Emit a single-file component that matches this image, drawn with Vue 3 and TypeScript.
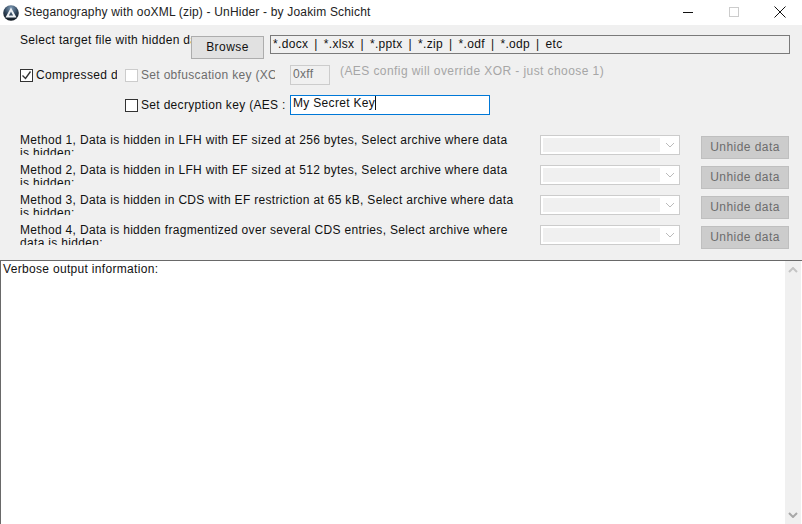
<script setup lang="ts">
const methods = [
  'Method 1, Data is hidden in LFH with EF sized at 256 bytes, Select archive where data is hidden:',
  'Method 2, Data is hidden in LFH with EF sized at 512 bytes, Select archive where data is hidden:',
  'Method 3, Data is hidden in CDS with EF restriction at 65 kB, Select archive where data is hidden:',
  'Method 4, Data is hidden fragmentized over several CDS entries, Select archive where data is hidden:',
];
</script>

<template>
  <div class="window">
    <header class="titlebar">
      <svg class="logo" width="16" height="16" viewBox="0 0 16 16">
        <defs>
          <radialGradient id="orb" cx="50%" cy="20%" r="80%">
            <stop offset="0" stop-color="#7f9cb8" />
            <stop offset="0.55" stop-color="#2f4358" />
            <stop offset="1" stop-color="#10161d" />
          </radialGradient>
        </defs>
        <circle cx="8" cy="8" r="7.8" fill="url(#orb)" />
        <path d="M8 2.5 L13.5 12.5 H2.5 Z M8 6.4 L5.9 10.4 H10.1 Z" fill="#eef2f6" fill-rule="evenodd" />
      </svg>
      <span class="title">Steganography with ooXML (zip) - UnHider - by Joakim Schicht</span>
      <div class="controls">
        <svg width="12" height="12" viewBox="0 0 12 12"><path d="M1 6.5H11" stroke="#111" /></svg>
        <svg width="12" height="12" viewBox="0 0 12 12"><rect x="1.5" y="1.5" width="9" height="9" fill="none" stroke="#ccc" /></svg>
        <svg width="12" height="12" viewBox="0 0 12 12"><path d="M.5.5l11 11M11.5.5l-11 11" stroke="#111" /></svg>
      </div>
    </header>

    <main class="panel">
      <section class="row-file">
        <span class="clip label-file">Select target file with hidden data:</span>
        <button class="browse">Browse</button>
        <div class="field-file">*.docx | *.xlsx | *.pptx | *.zip | *.odf | *.odp | etc</div>
      </section>

      <section class="row-options">
        <span class="check checked">
          <svg width="11" height="11" viewBox="0 0 11 11"><path d="M1.5 5.5l3 3 5-7" fill="none" stroke="#333" stroke-width="1.4" /></svg>
        </span>
        <span class="clip label-compressed">Compressed data</span>
        <span class="check disabled"></span>
        <span class="clip label-obf">Set obfuscation key (XOR)</span>
        <div class="field-xor">0xff</div>
        <span class="hint">(AES config will override XOR - just choose 1)</span>
      </section>

      <section class="row-key">
        <span class="check"></span>
        <span class="clip label-key">Set decryption key (AES :</span>
        <div class="field-key">My Secret Key<i class="caret"></i></div>
      </section>

      <section class="methods">
        <div v-for="m in methods" :key="m" class="method">
          <p class="method-text">{{ m }}</p>
          <div class="select">
            <span class="select-inner"></span>
            <svg width="10" height="6" viewBox="0 0 10 6"><path d="M1 1l4 4 4-4" fill="none" stroke="#bbb" /></svg>
          </div>
          <button class="unhide" disabled>Unhide data</button>
        </div>
      </section>
    </main>

    <section class="output">
      <div class="output-text">Verbose output information:</div>
      <div class="scrollbar">
        <svg width="10" height="6" viewBox="0 0 10 6"><path d="M1 5l4-4 4 4" fill="none" stroke="#c4c4c4" stroke-width="2" /></svg>
        <svg width="10" height="6" viewBox="0 0 10 6"><path d="M1 1l4 4 4-4" fill="none" stroke="#a8a8a8" stroke-width="2" /></svg>
      </div>
    </section>
  </div>
</template>

<style scoped>
.window {
  width: 802px;
  height: 524px;
  display: flex;
  flex-direction: column;
  background: #f0f0f0;
  font-family: "Liberation Sans", Arial, sans-serif;
  font-size: 12px;
  letter-spacing: 0.32px;
  color: #111;
  overflow: hidden;
}
.titlebar {
  height: 25px;
  box-sizing: border-box;
  padding: 0 0 1px 3px;
  flex: none;
  display: flex;
  align-items: center;
  background: #fff;
}
.logo {
  margin: 1px 5px 0 0;
}
.title {
  flex: 1;
  color: #222;
  letter-spacing: 0.18px;
}
.controls {
  display: flex;
  gap: 34px;
  padding-right: 16px;
}
.panel {
  height: 235px;
  flex: none;
  box-sizing: border-box;
  display: flex;
  flex-direction: column;
  padding: 0 12px 0 20px;
}
.clip {
  display: block;
  overflow: hidden;
  white-space: nowrap;
  flex: none;
}
.row-file {
  display: flex;
  align-items: flex-start;
  box-sizing: border-box;
  height: 40px;
  padding-top: 10px;
}
.label-file {
  width: 171px;
  margin-top: -2px;
}
.browse {
  width: 73px;
  height: 23px;
  margin-top: 1px;
  background: #e1e1e1;
  border: 1px solid #adadad;
  font: inherit;
  letter-spacing: 0.45px;
  color: #111;
  padding: 0 0 2px;
}
.field-file {
  width: 520px;
  height: 19px;
  margin-left: 6px;
  border: 1px solid #7a7a7a;
  box-sizing: border-box;
  line-height: 16px;
  padding-left: 2px;
  word-spacing: 2.4px;
}
.row-options {
  display: flex;
  align-items: center;
  height: 20px;
}
.check {
  width: 13px;
  height: 13px;
  box-sizing: border-box;
  border: 1px solid #333;
  background: #fff;
  flex: none;
  display: flex;
  align-items: center;
  justify-content: center;
}
.check.disabled {
  border-color: #ccc;
}
.label-compressed {
  width: 81px;
  margin: 0 8px 0 3px;
}
.label-obf {
  width: 134px;
  margin-left: 3px;
  color: #6d6d6d;
}
.field-xor {
  width: 40px;
  height: 20px;
  box-sizing: border-box;
  margin-left: 15px;
  border: 1px solid #ccc;
  color: #6d6d6d;
  line-height: 17px;
  padding-left: 2px;
}
.hint {
  margin: -9px 0 0 10px;
  color: #a6a6a6;
  white-space: nowrap;
  letter-spacing: 0.42px;
}
.row-key {
  display: flex;
  align-items: center;
  height: 20px;
  margin-top: 10px;
  padding-left: 105px;
}
.label-key {
  width: 145px;
  margin-left: 3px;
}
.field-key {
  width: 200px;
  height: 20px;
  box-sizing: border-box;
  margin-left: 4px;
  border: 1px solid #0078d7;
  background: #fff;
  line-height: 15px;
  padding-left: 2px;
}
.caret {
  display: inline-block;
  width: 1px;
  height: 14px;
  background: #111;
  vertical-align: -3px;
}
.methods {
  display: flex;
  flex-direction: column;
  gap: 10px;
  margin-top: 20px;
}
.method {
  display: grid;
  grid-template-columns: 520px 140px 109px;
  height: 20px;
}
.method > * {
  min-width: 0;
}
.method-text {
  margin: -1px 0 0;
  width: 498px;
  height: 21px;
  overflow: hidden;
  line-height: 13px;
}
.select {
  height: 20px;
  box-sizing: border-box;
  border: 1px solid #ccc;
  background: #fff;
  display: flex;
  align-items: center;
  padding: 0 4px 0 2px;
  justify-content: space-between;
}
.select-inner {
  width: 117px;
  height: 14px;
  background: #f0f0f0;
}
.unhide {
  width: 88px;
  height: 23px;
  margin: 1px 0 0 21px;
  background: #ccc;
  border: 1px solid #bfbfbf;
  color: #6d6d6d;
  font: inherit;
  letter-spacing: 0.45px;
  padding: 0 0 2px;
}
.output {
  flex: 1;
  display: flex;
  background: #fff;
  border-top: 1px solid #696969;
  border-left: 1px solid #696969;
  min-height: 0;
}
.output-text {
  flex: 1;
  padding: 1px 0 0 2px;
}
.scrollbar {
  width: 16px;
  margin-right: 1px;
  background: #f0f0f0;
  display: flex;
  flex-direction: column;
  align-items: center;
  justify-content: space-between;
  padding: 6px 0;
}
</style>

<style>
html,
body {
  margin: 0;
  background: #f0f0f0;
}
</style>
